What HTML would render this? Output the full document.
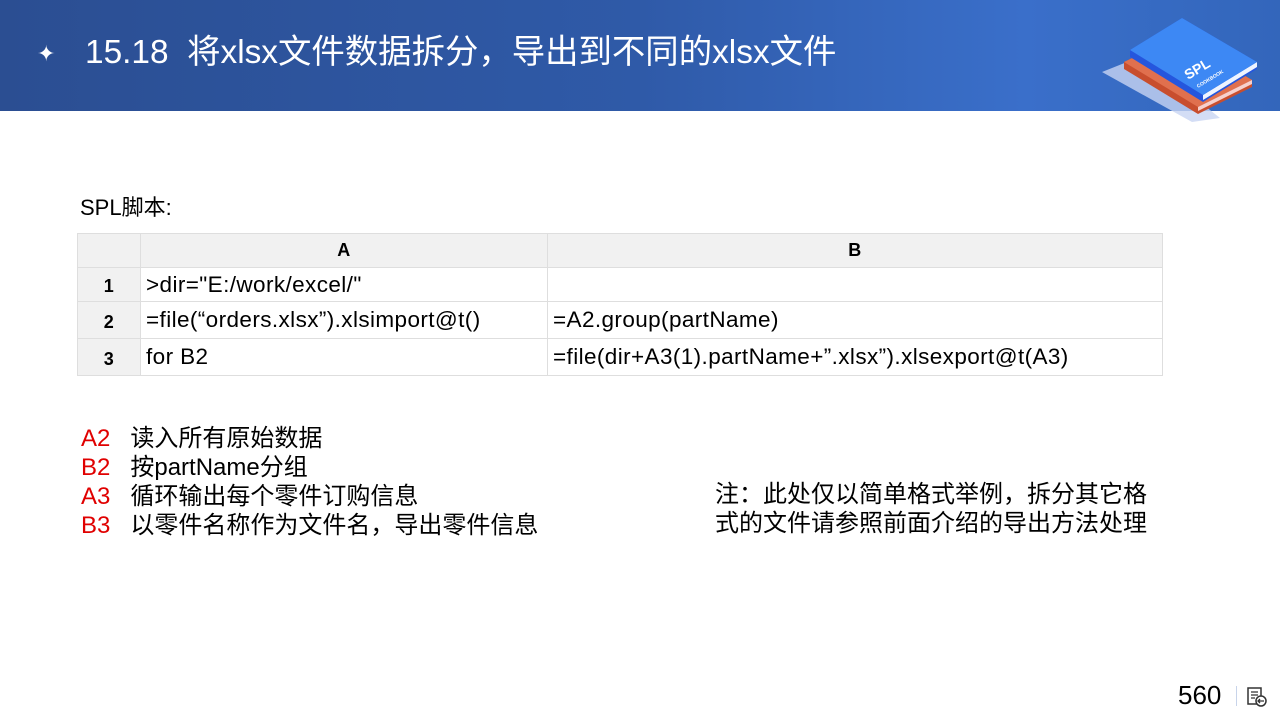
<!DOCTYPE html>
<html><head><meta charset="utf-8"><style>
*{margin:0;padding:0;box-sizing:border-box}
body{width:1280px;height:720px;position:relative;background:#fff;font-family:"Liberation Sans","Noto Sans CJK SC",sans-serif;overflow:hidden;color:#000}
.hdr{position:absolute;left:0;top:0;width:1280px;height:111px;background:linear-gradient(90deg,#2b4e92 0%,#2f5aa8 50%,#3a6fca 80%,#3366bb 100%)}
.title{position:absolute;left:85px;top:32px;color:#fff;font-size:33.4px;line-height:42px;white-space:nowrap}
.star{position:absolute;left:37px;top:43px;color:#fff;font-size:22px;line-height:22px}
.t{position:absolute;font-size:22px;line-height:28px;white-space:nowrap}
table{position:absolute;left:77px;top:233px;border-collapse:collapse;font-size:22.5px;letter-spacing:0.4px;table-layout:fixed}
td{border:1px solid #dedede;height:34px;padding:0 5px;white-space:nowrap;overflow:hidden}
.g{background:#f1f1f1;text-align:center;font-weight:bold;font-size:18px}
.n{background:#f1f1f1;text-align:center;font-weight:bold;font-size:18px;padding-top:4px}
.r{color:#e00000}
</style></head><body>
<div class="hdr"></div>
<div class="star">✦</div>
<div class="title">15.18&nbsp;&nbsp;将xlsx文件数据拆分，导出到不同的xlsx文件</div>
<svg style="position:absolute;left:1080px;top:0" width="200" height="130" viewBox="0 0 200 130">
<polygon points="22,72 62,56 140,118 112,122" fill="#c8d4f2" opacity="0.8"/>
<polygon points="44,62 98,36 172,80 172,87 118,114 44,69" fill="#c84e2e"/>
<polygon points="44,62 98,36 172,80 118,107" fill="#e0704e"/>
<polygon points="118,107 172,80 172,84 118,111" fill="#f6d0cc"/>
<polygon points="50,50 102,18 177,62 177,69 123,102 50,57" fill="#2556dd"/>
<polygon points="123,95 177,62 177,67 123,100" fill="#eef4ff"/>
<polygon points="50,50 102,18 177,62 123,95" fill="#3d88f4"/>
<text x="108" y="80" fill="#fff" font-size="14" font-weight="bold" transform="rotate(-31 108 80)">SPL</text>
<text x="118" y="88" fill="#fff" font-size="5" font-weight="bold" transform="rotate(-31 118 88)">COOKBOOK</text>
</svg>
<div class="t" style="left:80px;top:194px">SPL脚本:</div>
<table>
<colgroup><col style="width:63px"><col style="width:407px"><col style="width:615px"></colgroup>
<tr><td class="g"></td><td class="g">A</td><td class="g">B</td></tr>
<tr><td class="n">1</td><td>&gt;dir="E:/work/excel/"</td><td></td></tr>
<tr><td class="n" style="height:37px">2</td><td>=file(“orders.xlsx”).xlsimport@t()</td><td>=A2.group(partName)</td></tr>
<tr><td class="n" style="height:37px">3</td><td>for B2</td><td>=file(dir+A3(1).partName+”.xlsx”).xlsexport@t(A3)</td></tr>
</table>
<div class="t" style="left:81px;top:424px;line-height:29px;font-size:24px"><span class="r">A2</span>&nbsp;&nbsp;&nbsp;读入所有原始数据<br><span class="r">B2</span>&nbsp;&nbsp;&nbsp;按partName分组<br><span class="r">A3</span>&nbsp;&nbsp;&nbsp;循环输出每个零件订购信息<br><span class="r">B3</span>&nbsp;&nbsp;&nbsp;以零件名称作为文件名，导出零件信息</div>
<div class="t" style="left:715px;top:480px;line-height:29px;font-size:24px">注：此处仅以简单格式举例，拆分其它格<br>式的文件请参照前面介绍的导出方法处理</div>
<div class="t" style="left:1178px;top:680px;font-size:26px;line-height:30px">560</div>
<div style="position:absolute;left:1236px;top:686px;width:1px;height:20px;background:#c8d4ea"></div>
<svg style="position:absolute;left:1246px;top:686px" width="22" height="22" viewBox="0 0 22 22"><rect x="2" y="2" width="13" height="16" fill="none" stroke="#333" stroke-width="1.5"/><path d="M5 6h7M5 9h7M5 12h4" stroke="#333" stroke-width="1.3"/><circle cx="15" cy="15" r="5" fill="#fff" stroke="#333" stroke-width="1.5"/><path d="M18 15h-6M14 13l-2 2 2 2" stroke="#333" stroke-width="1.3" fill="none"/></svg>
</body></html>
